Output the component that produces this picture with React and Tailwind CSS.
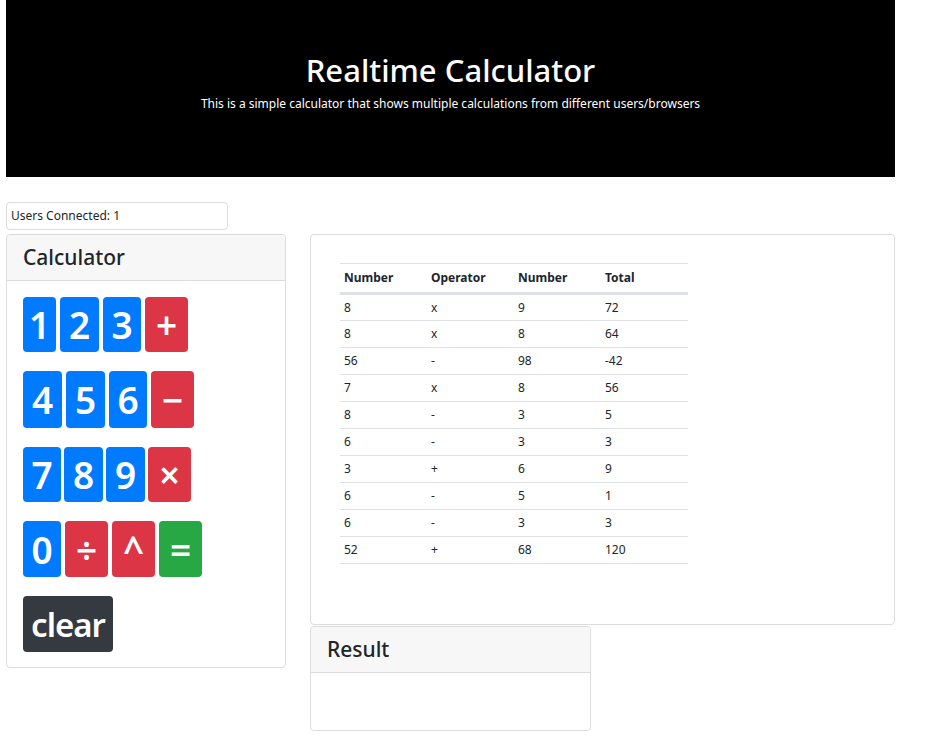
import React from "react";

const font = { fontFamily: '"Noto Sans", "Open Sans", sans-serif' };

const rows = [
  ["8", "x", "9", "72"],
  ["8", "x", "8", "64"],
  ["56", "-", "98", "-42"],
  ["7", "x", "8", "56"],
  ["8", "-", "3", "5"],
  ["6", "-", "3", "3"],
  ["3", "+", "6", "9"],
  ["6", "-", "5", "1"],
  ["6", "-", "3", "3"],
  ["52", "+", "68", "120"],
];

function Btn({ children, color, w, h = "h-[55px]", text = "text-[37px]" }) {
  return (
    <button
      className={`${color} ${w} ${h} ${text} rounded flex items-center justify-center text-white leading-none font-semibold`}
    >
      {children}
    </button>
  );
}

const blue = "bg-[#007bff]";
const red = "bg-[#dc3545]";
const green = "bg-[#28a745]";

export default function App() {
  return (
    <div style={font} className="w-[928px] h-[756px] bg-white text-[#212529]">
      <div className="ml-[6px] w-[889px] h-[177px] bg-black text-white flex flex-col items-center pt-[50px]">
        <h1 className="text-[31px] leading-[40px] font-medium">Realtime Calculator</h1>
        <p className="text-[12px] leading-[20px] mt-[4px]">
          This is a simple calculator that shows multiple calculations from different users/browsers
        </p>
      </div>

      <div className="ml-[6px] mt-[25px] w-[222px] h-[28px] border border-[#dcdcdc] rounded flex items-center px-[4px] text-[12px]">
        Users Connected: 1
      </div>

      <div className="flex ml-[6px] mt-[4px] items-start">
        <div className="w-[280px] h-[434px] border border-[#dcdcdc] rounded flex flex-col">
          <div className="h-[46px] bg-[#f7f7f7] border-b border-[#dcdcdc] flex items-center px-[16px] text-[21px] font-medium rounded-t">
            Calculator
          </div>
          <div className="px-[16px] pt-[16px] flex flex-col gap-[19px]">
            <div className="flex gap-[4px]">
              <Btn color={blue} w="w-[33px]">1</Btn>
              <Btn color={blue} w="w-[39px]">2</Btn>
              <Btn color={blue} w="w-[38px]">3</Btn>
              <Btn color={red} w="w-[43px]">+</Btn>
            </div>
            <div className="flex gap-[4px]">
              <Btn color={blue} w="w-[39px]" h="h-[57px]">4</Btn>
              <Btn color={blue} w="w-[39px]" h="h-[57px]">5</Btn>
              <Btn color={blue} w="w-[38px]" h="h-[57px]">6</Btn>
              <Btn color={red} w="w-[43px]" h="h-[57px]">−</Btn>
            </div>
            <div className="flex gap-[3px]">
              <Btn color={blue} w="w-[38px]">7</Btn>
              <Btn color={blue} w="w-[39px]">8</Btn>
              <Btn color={blue} w="w-[39px]">9</Btn>
              <Btn color={red} w="w-[43px]">×</Btn>
            </div>
            <div className="flex gap-[4px]">
              <Btn color={blue} w="w-[38px]" h="h-[56px]">0</Btn>
              <Btn color={red} w="w-[43px]" h="h-[56px]">÷</Btn>
              <Btn color={red} w="w-[43px]" h="h-[56px]">^</Btn>
              <Btn color={green} w="w-[43px]" h="h-[56px]">=</Btn>
            </div>
            <div className="flex">
              <Btn
                color="bg-[#343a40]"
                w="w-[90px]"
                h="h-[56px]"
                text="text-[33px] tracking-[-1px] font-medium"
              >
                clear
              </Btn>
            </div>
          </div>
        </div>

        <div className="ml-[24px] flex flex-col">
          <div className="w-[585px] h-[391px] border border-[#dcdcdc] rounded pt-[28px] pl-[29px]">
            <table className="w-[348px] text-[12px] border-collapse table-fixed">
              <thead>
                <tr className="border-t border-[#dee2e6]">
                  <th className="text-left font-bold px-[4px] h-[30px] w-[87px]">Number</th>
                  <th className="text-left font-bold px-[4px] h-[30px] w-[87px]">Operator</th>
                  <th className="text-left font-bold px-[4px] h-[30px] w-[87px]">Number</th>
                  <th className="text-left font-bold px-[4px] h-[30px] w-[87px]">Total</th>
                </tr>
              </thead>
              <tbody>
                {rows.map((r, i) => (
                  <tr
                    key={i}
                    className={i === 0 ? "border-t-[3px] border-[#dee2e6]" : "border-t border-[#dee2e6]"}
                  >
                    {r.map((c, j) => (
                      <td key={j} className="px-[4px] h-[27px]">
                        {c}
                      </td>
                    ))}
                  </tr>
                ))}
                <tr className="border-t border-[#dee2e6]">
                  <td colSpan={4} className="h-0 p-0"></td>
                </tr>
              </tbody>
            </table>
          </div>
          <div className="w-[281px] h-[105px] border border-[#dcdcdc] rounded mt-[1px] flex flex-col">
            <div className="h-[46px] bg-[#f7f7f7] border-b border-[#dcdcdc] flex items-center px-[16px] text-[21px] font-medium rounded-t">
              Result
            </div>
          </div>
        </div>
      </div>
    </div>
  );
}
